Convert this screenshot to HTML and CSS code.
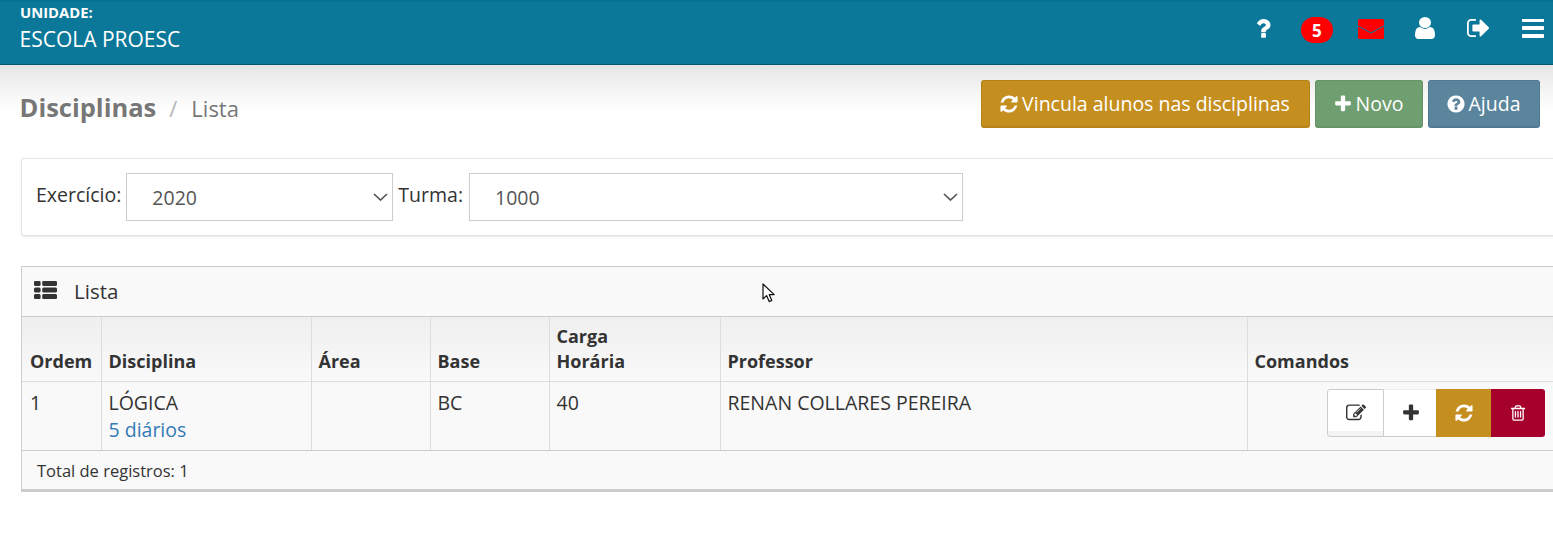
FILE: index.html
```html
<!DOCTYPE html>
<html lang="pt">
<head>
<meta charset="utf-8">
<title>Disciplinas</title>
<link rel="stylesheet" href="styles.css">
</head>
<body>
<svg class="defs" width="0" height="0" aria-hidden="true">
  <symbol id="i-refresh" viewBox="0 0 1792 1792"><path d="M1639 1056q0 5-1 7-64 268-268 434.5t-478 166.5q-146 0-282.5-55t-243.5-157l-129 129q-19 19-45 19t-45-19-19-45v-448q0-26 19-45t45-19h448q26 0 45 19t19 45-19 45l-137 137q71 66 161 102t187 36q134 0 250-65t186-179q11-17 53-117 8-23 30-23h192q13 0 22.5 9.5t9.5 22.5zm25-800v448q0 26-19 45t-45 19h-448q-26 0-45-19t-19-45 19-45l138-138q-148-137-349-137-134 0-250 65t-186 179q-11 17-53 117-8 23-30 23h-199q-13 0-22.5-9.5t-9.5-22.5v-7q65-268 270-434.5t480-166.5q146 0 284 55.5t245 156.5l130-129q19-19 45-19t45 19 19 45z"/></symbol>
  <symbol id="i-plus" viewBox="0 0 1792 1792"><path d="M1600 736v192q0 40-28 68t-68 28h-416v416q0 40-28 68t-68 28h-192q-40 0-68-28t-28-68v-416h-416q-40 0-68-28t-28-68v-192q0-40 28-68t68-28h416v-416q0-40 28-68t68-28h192q40 0 68 28t28 68v416h416q40 0 68 28t28 68z"/></symbol>
</svg>
<header class="topbar">
  <div class="unit">
    <div class="unit-label">UNIDADE:</div>
    <div class="unit-name">ESCOLA PROESC</div>
  </div>
  <nav class="topnav">
    <a class="nav-item"><svg class="ic-question" viewBox="500 250 920 1300"><path d="M1088 1256v240q0 16-12 28t-28 12h-240q-16 0-28-12t-12-28v-240q0-16 12-28t28-12h240q16 0 28 12t12 28zm316-600q0 54-15.5 101t-35 76.5-55 59.5-57.5 43.5-61 35.5q-41 23-68.5 65t-27.5 67q0 17-12 32.5t-28 15.5h-240q-15 0-25.5-18.5t-10.5-37.5v-45q0-83 65-156.5t143-108.5q59-27 84-56t25-76q0-42-46.5-74t-107.5-32q-65 0-108 29-35 25-107 115-13 16-31 16-12 0-25-8l-164-125q-13-10-15.5-25t5.5-28q160-266 464-266 80 0 161 31t146 83 106 127.5 41 158.5z"/></svg></a>
    <a class="nav-item nav-badge"><span class="badge">5</span></a>
    <a class="nav-item"><svg class="ic-mail" viewBox="0 0 26 20"><rect width="26" height="20" rx="1.5" fill="#f00"/><path d="M0 7l13 7 13-7" fill="none" stroke="#0b7899" stroke-width="1.1"/></svg></a>
    <a class="nav-item"><svg class="ic-user" viewBox="256 128 1280 1536" preserveAspectRatio="none"><path d="M1536 1399q0 109-62.5 187t-150.5 78h-854q-88 0-150.5-78t-62.5-187q0-85 8.5-160.5t31.5-152 58.5-131 94-89 134.5-34.5q131 128 313 128t313-128q76 0 134.5 34.5t94 89 58.5 131 31.5 152 8.5 160.5zm-256-887q0 159-112.5 271.5t-271.5 112.5-271.5-112.5-112.5-271.5 112.5-271.5 271.5-112.5 271.5 112.5 112.5 271.5z"/></svg></a>
    <a class="nav-item nav-out"><svg class="ic-out" viewBox="64 256 1568 1280"><path d="M704 1440q0 4 1 20t.5 26.5-3 23.5-10 19.5-20.5 6.5h-320q-119 0-203.5-84.5t-84.5-203.5v-704q0-119 84.5-203.5t203.5-84.5h320q13 0 22.5 9.5t9.5 22.5q0 4 1 20t.5 26.5-3 23.5-10 19.5-20.5 6.5h-320q-66 0-113 47t-47 113v704q0 66 47 113t113 47h312l11.5 1 11.5 3 8 5.5 7 9 2 13.5zm928-544q0 26-19 45l-544 544q-19 19-45 19t-45-19-19-45v-288h-448q-26 0-45-19t-19-45v-384q0-26 19-45t45-19h448v-288q0-26 19-45t45-19 45 19l544 544q19 19 19 45z"/></svg></a>
    <a class="nav-item nav-bars"><svg class="ic-bars" viewBox="128 320 1536 1216" preserveAspectRatio="none"><path d="M1664 1344v128q0 26-19 45t-45 19h-1408q-26 0-45-19t-19-45v-128q0-26 19-45t45-19h1408q26 0 45 19t19 45zm0-512v128q0 26-19 45t-45 19h-1408q-26 0-45-19t-19-45v-128q0-26 19-45t45-19h1408q26 0 45 19t19 45zm0-512v128q0 26-19 45t-45 19h-1408q-26 0-45-19t-19-45v-128q0-26 19-45t45-19h1408q26 0 45 19t19 45z"/></svg></a>
  </nav>
</header>

<main class="page">
  <div class="page-head">
    <h1 class="crumbs"><span class="crumb-main">Disciplinas</span><span class="crumb-sep">/</span><span class="crumb-sub">Lista</span></h1>
    <div class="actions">
      <button class="btn btn-gold"><svg class="ic-btn"><use href="#i-refresh"/></svg>Vincula alunos nas disciplinas</button>
      <button class="btn btn-green"><svg class="ic-btn"><use href="#i-plus"/></svg>Novo</button>
      <button class="btn btn-blue"><svg class="ic-btn" viewBox="0 0 1792 1792"><path d="M1024 1376v-192q0-14-9-23t-23-9h-192q-14 0-23 9t-9 23v192q0 14 9 23t23 9h192q14 0 23-9t9-23zm256-672q0-88-55.5-163t-138.5-116-170-41q-243 0-371 213-15 24 8 42l132 100q7 6 19 6 16 0 25-12 53-68 86-92 34-24 86-24 48 0 85.5 26t37.5 59q0 38-20 61t-68 45q-63 28-115.5 86.5t-52.5 125.5v36q0 14 9 23t23 9h192q14 0 23-9t9-23q0-19 21.5-49.5t54.5-49.5q32-18 49-28.5t46-35 44.5-48 28-60.5 12.5-81zm384 192q0 209-103 385.5t-279.5 279.5-385.5 103-385.5-103-279.5-279.5-103-385.5 103-385.5 279.5-279.5 385.5-103 385.5 103 279.5 279.5 103 385.5z"/></svg>Ajuda</button>
    </div>
  </div>

  <form class="filter-card">
    <label class="f-label" for="ex">Exercício:</label>
    <div class="f-wrap f-ex">
      <select id="ex" class="f-select"><option>2020</option></select>
      <svg class="f-chev" viewBox="0 0 15 8"><path d="M1 1l6.5 6L14 1" fill="none" stroke="#555" stroke-width="1.7"/></svg>
    </div>
    <label class="f-label" for="tu">Turma:</label>
    <div class="f-wrap f-tu">
      <select id="tu" class="f-select"><option>1000</option></select>
      <svg class="f-chev" viewBox="0 0 15 8"><path d="M1 1l6.5 6L14 1" fill="none" stroke="#555" stroke-width="1.7"/></svg>
    </div>
  </form>

  <section class="panel">
    <div class="panel-title">
      <svg class="ic-list" viewBox="0 128 1792 1408" preserveAspectRatio="none"><path d="M512 1248v192q0 40-28 68t-68 28h-320q-40 0-68-28t-28-68v-192q0-40 28-68t68-28h320q40 0 68 28t28 68zm0-512v192q0 40-28 68t-68 28h-320q-40 0-68-28t-28-68v-192q0-40 28-68t68-28h320q40 0 68 28t28 68zm1280 512v192q0 40-28 68t-68 28h-960q-40 0-68-28t-28-68v-192q0-40 28-68t68-28h960q40 0 68 28t28 68zm-1280-1024v192q0 40-28 68t-68 28h-320q-40 0-68-28t-28-68v-192q0-40 28-68t68-28h320q40 0 68 28t28 68zm1280 512v192q0 40-28 68t-68 28h-960q-40 0-68-28t-28-68v-192q0-40 28-68t68-28h960q40 0 68 28t28 68zm0-512v192q0 40-28 68t-68 28h-960q-40 0-68-28t-28-68v-192q0-40 28-68t68-28h960q40 0 68 28t28 68z"/></svg>
      <span>Lista</span>
    </div>
    <table class="grid">
      <colgroup>
        <col class="c-ordem"><col class="c-disc"><col class="c-area"><col class="c-base"><col class="c-carga"><col class="c-prof"><col class="c-cmd">
      </colgroup>
      <thead>
        <tr><th>Ordem</th><th>Disciplina</th><th>Área</th><th>Base</th><th>Carga<br>Horária</th><th>Professor</th><th>Comandos</th></tr>
      </thead>
      <tbody>
        <tr>
          <td>1</td>
          <td>LÓGICA<br><a class="link">5 diários</a></td>
          <td></td>
          <td>BC</td>
          <td>40</td>
          <td>RENAN COLLARES PEREIRA</td>
          <td class="cmd-cell">
            <div class="cmds">
              <a class="cmd cmd-edit"><svg class="ic-cmd" viewBox="0 0 1792 1792"><path d="M888 1184l116-116-152-152-116 116v56h96v96h56zm440-720q-16-16-33 1l-350 350q-17 17-1 33t33-1l350-350q17-17 1-33zm80 594v190q0 119-84.5 203.5t-203.5 84.5h-832q-119 0-203.5-84.5t-84.5-203.5v-832q0-119 84.5-203.5t203.5-84.5h832q63 0 117 25 15 7 18 23 3 17-9 29l-49 49q-14 14-32 8-23-6-45-6h-832q-66 0-113 47t-47 113v832q0 66 47 113t113 47h832q66 0 113-47t47-113v-126q0-13 9-22l64-64q15-15 35-7t20 29zm-96-738l288 288-672 672h-288v-288zm444 132l-92 92-288-288 92-92q28-28 68-28t68 28l152 152q28 28 28 68t-28 68z"/></svg></a>
              <a class="cmd cmd-plus"><svg class="ic-cmd"><use href="#i-plus"/></svg></a>
              <a class="cmd cmd-sync"><svg class="ic-cmd"><use href="#i-refresh"/></svg></a>
              <a class="cmd cmd-del"><svg class="ic-cmd" viewBox="0 0 1792 1792"><path d="M704 736v576q0 14-9 23t-23 9h-64q-14 0-23-9t-9-23v-576q0-14 9-23t23-9h64q14 0 23 9t9 23zm256 0v576q0 14-9 23t-23 9h-64q-14 0-23-9t-9-23v-576q0-14 9-23t23-9h64q14 0 23 9t9 23zm256 0v576q0 14-9 23t-23 9h-64q-14 0-23-9t-9-23v-576q0-14 9-23t23-9h64q14 0 23 9t9 23zm128 724v-948h-896v948q0 22 7 40.5t14.5 27 10.5 8.5h832q3 0 10.5-8.5t14.5-27 7-40.5zm-672-1076h448l-48-117q-7-9-17-11h-317q-10 2-17 11zm928 32v64q0 14-9 23t-23 9h-96v948q0 83-47 143.5t-113 60.5h-832q-66 0-113-61.5t-47-145.5v-945h-96q-14 0-23-9t-9-23v-64q0-14 9-23t23-9h309l70-167q15-37 54-63t79-26h320q40 0 79 26t54 63l70 167h309q14 0 23 9t9 23z"/></svg></a>
            </div>
          </td>
        </tr>
      </tbody>
    </table>
    <div class="panel-foot">Total de registros: 1</div>
  </section>
</main>

<svg class="cursor" viewBox="0 0 14 20" width="14" height="20"><path d="M1 1v15l3.6-3.4 2.6 6 2.6-1.1-2.6-5.9h5z" fill="#fff" stroke="#111" stroke-width="1.2" stroke-linejoin="round"/></svg>
</body>
</html>
```
FILE: styles.css
```css
* { box-sizing: border-box; }
html, body { margin: 0; padding: 0; height: 100%; overflow: hidden; background: #fff; }
body { font-family: "Open Sans", "Noto Sans", sans-serif; font-size: 19.5px; color: #333; position: relative; }
.defs { position: absolute; }
svg { fill: currentColor; display: block; }

.topbar {
  height: 65px;
  background: #0b7899;
  border-bottom: 1px solid #07566f;
  box-shadow: inset 0 2px 2px -1px #086a88;
  color: #fff;
  display: flex;
  justify-content: space-between;
  padding-left: 20px;
}
.unit-label { font-size: 14.8px; font-weight: 700; line-height: 18px; padding-top: 3px; }
.unit-name { font-size: 21px; line-height: 28px; margin-top: 4px; margin-left: -0.5px; }

.topnav { display: flex; margin-right: -6px; }
.nav-item { width: 53.6px; height: 60px; display: flex; align-items: center; justify-content: center; }
.nav-badge { margin-right: 1px; margin-left: -1px; }
.nav-out { margin-right: 1px; margin-left: -1px; }
.nav-bars { padding-left: 2px; }
.ic-question { width: 14px; height: 19px; margin-bottom: 4px; }
.badge {
  width: 32px; height: 26px; border-radius: 13px;
  background: #f00; color: #fff;
  font-size: 17px; font-weight: 700; line-height: 27px; text-align: center;
}
.ic-mail { width: 26px; height: 20px; margin-bottom: 2px; }
.ic-user { width: 20px; height: 22px; margin-bottom: 4px; }
.ic-out { width: 22px; height: 18px; margin-bottom: 4px; }
.ic-bars { width: 22px; height: 19px; margin-bottom: 4px; }

.page { padding-left: 21px; background: linear-gradient(#e6e6e6, #fff 45px) no-repeat; background-size: 100% 60px; height: 469px; }

.page-head { display: flex; justify-content: space-between; align-items: flex-start; padding-top: 15px; padding-right: 13px; margin-left: -1px; }
.crumbs { margin: -1px 0 0 -0.5px; padding-top: 11px; font-weight: 400; line-height: 34px; display: flex; align-items: baseline; }
.crumb-main { font-size: 25.5px; font-weight: 700; color: #777; }
.crumb-sep { font-size: 22px; color: #b5b5b5; margin: 0 14px 0 13px; }
.crumb-sub { font-size: 22px; color: #777; }

.actions { display: flex; gap: 5px; }
.btn {
  height: 48px; border: 1px solid; border-bottom-width: 2px; border-radius: 3px;
  font: 400 19.5px "Open Sans", sans-serif; color: #fff;
  display: flex; align-items: center; padding: 0 2px 0 0;
  justify-content: center;
}
.ic-btn { width: 20px; height: 20px; margin-right: 3px; }
.btn-gold { width: 329px; background: #c58f20; border-color: #b5821a; }
.btn-green { width: 108px; background: #6f9e70; border-color: #659466; }
.btn-blue { width: 112px; background: #5a859c; border-color: #4f7a91; }

.filter-card {
  width: 1540px; height: 78px; margin-top: 30px;
  border: 1px solid #e4e4e4; border-radius: 3px;
  box-shadow: 0 1px 2px rgba(0,0,0,.1);
  background: #fff;
  display: flex; align-items: flex-start; gap: 5px;
  padding: 14px 0 0 14px;
}
.f-label { line-height: 43px; color: #333; }
.f-wrap { position: relative; height: 48px; }
.f-select {
  display: block; width: 100%; height: 48px; border: 1px solid #ccc; border-radius: 0;
  appearance: none;
  background-color: #fff; color: #555;
  font: 400 19.5px "Open Sans", sans-serif;
  padding: 0 0 0 25px;
}
.f-chev { position: absolute; right: 5px; top: 20px; width: 15px; height: 8px; pointer-events: none; }
.f-ex { width: 267px; }
.f-tu { width: 494px; margin-left: 1px; }

.panel { width: 1540px; margin-top: 30px; border: 1px solid #ccc; border-bottom-width: 3px; background: #f9f9f9; }
.panel-title { height: 50px; display: flex; align-items: center; padding-left: 12px; font-size: 20.5px; border-bottom: 1px solid #ccc; }
.panel-title span { margin-left: 17px; color: #333; line-height: 49px; }
.ic-list { width: 23px; height: 18px; margin-bottom: 4px; }

.grid { width: 1531px; table-layout: fixed; border-collapse: collapse; }
.c-ordem { width: 79px; } .c-disc { width: 210px; } .c-area { width: 119px; } .c-base { width: 119px; }
.c-carga { width: 171px; } .c-prof { width: 527px; } .c-cmd { width: 306px; }
.grid th {
  height: 64px; text-align: left; vertical-align: bottom; font-size: 18px; line-height: 25px;
  padding: 0 7px 7px 7px; color: #333;
  background: linear-gradient(#efefef, #f9f9f9);
  border-left: 1px solid #ddd; border-bottom: 1px solid #ddd;
}
.grid td {
  height: 69px; vertical-align: top; padding: 7px 7px 0 7px; line-height: 27px;
  border-left: 1px solid #ddd; border-bottom: 1px solid #ccc; background: #f9f9f9;
}
.grid th:first-child, .grid td:first-child { border-left: 0; padding-left: 8px; }
.link { color: #337ab7; }
.grid .cmd-cell { padding: 7px 8px 0 7px; }
.cmds { display: flex; justify-content: flex-end; height: 48px; }
.cmd { display: flex; align-items: center; justify-content: center; height: 48px; }
.ic-cmd { width: 20px; height: 20px; }
.cmd-edit { width: 57px; background: linear-gradient(#fff 90%, #f3f3f3 90%); border: 1px solid #ccc; border-radius: 3px 0 0 3px; color: #333; }
.cmd-plus { width: 52px; padding-left: 2px; background: #fff; border-bottom: 1px solid #ccc; border-top: 1px solid #eee; color: #333; }
.cmd-sync { width: 55px; background: #c58f20; color: #fff; }
.cmd-del { width: 54px; background: #a6002c; color: #fff; border-radius: 0 3px 3px 0; }
.cmd-del .ic-cmd { width: 18px; height: 18px; }

.panel-foot { height: 38px; padding-left: 15px; font-size: 16.5px; line-height: 40px; color: #333; }

.cursor { position: absolute; left: 762px; top: 283px; }
```
